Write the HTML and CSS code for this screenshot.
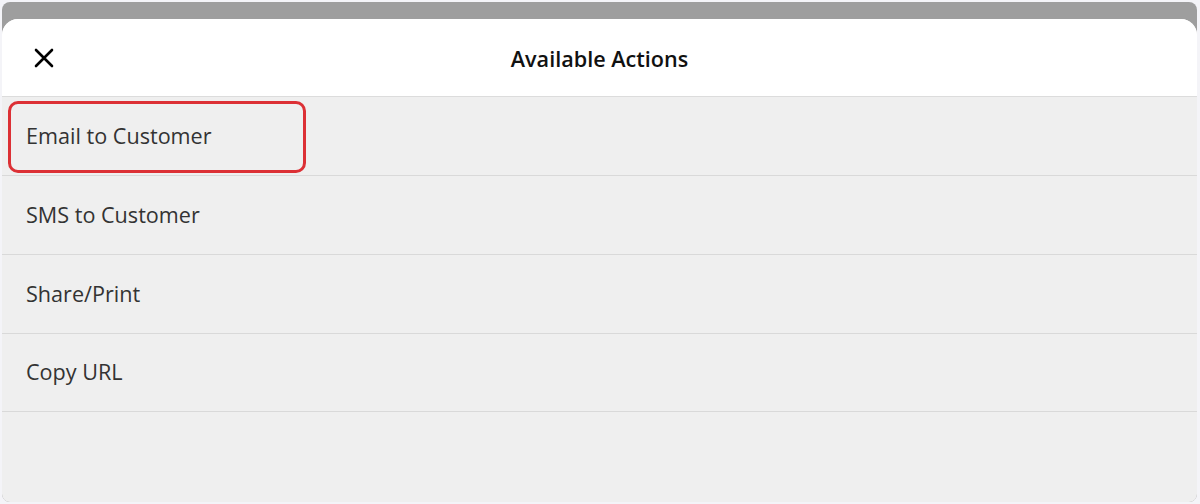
FILE: index.html
```html
<!DOCTYPE html>
<html>
<head>
<meta charset="utf-8">
<link rel="stylesheet" href="styles.css">
</head>
<body>
<div class="frame">
  <div class="sheet">
    <header class="sheet-header">
      <button class="close" aria-label="Close">
        <svg width="20" height="20" viewBox="0 0 20 20"><path d="M2 2 L18 18 M18 2 L2 18" stroke="#000" stroke-width="2.6" stroke-linecap="round" fill="none"/></svg>
      </button>
      <h1 class="title">Available Actions</h1>
    </header>
    <ul class="actions">
      <li class="action highlighted">Email to Customer<span class="mark"></span></li>
      <li class="action">SMS to Customer</li>
      <li class="action">Share/Print</li>
      <li class="action">Copy URL</li>
    </ul>
  </div>
</div>
</body>
</html>
```
FILE: styles.css
```css
html, body {
  margin: 0;
  padding: 0;
  background: #f4f4f8;
}
body {
  padding: 2px 3px 2px 2px;
  height: 504px;
  box-sizing: border-box;
  font-family: "Open Sans", "Noto Sans", sans-serif;
}
.frame {
  height: 500px;
  border-radius: 8px;
  background: #9e9e9e;
  overflow: hidden;
  padding-top: 17px;
  box-sizing: border-box;
  display: flex;
  flex-direction: column;
}
.sheet {
  flex: 1;
  background: #efefef;
  border-radius: 16px 16px 0 0;
  overflow: hidden;
  display: flex;
  flex-direction: column;
}
.sheet-header {
  height: 77px;
  background: #fff;
  border-bottom: 1px solid #dcdcdc;
  display: flex;
  align-items: center;
  justify-content: center;
  position: relative;
  flex-shrink: 0;
}
.close {
  position: absolute;
  left: 31px;
  top: 28px;
  width: 22px;
  height: 22px;
  padding: 0;
  border: 0;
  background: none;
  display: flex;
  align-items: center;
  justify-content: center;
}
.title {
  margin: 0;
  padding-top: 2px;
  font-size: 21.6px;
  font-weight: 600;
  color: #111;
}
.actions {
  list-style: none;
  margin: 0;
  padding: 0;
}
.action {
  height: 78px;
  box-sizing: content-box;
  border-bottom: 1px solid #d9d9d9;
  display: flex;
  align-items: center;
  padding-left: 24px;
  font-size: 21.6px;
  color: #333;
  position: relative;
}
.action:nth-child(n+3) {
  height: 77.5px;
}
.action > :first-child {
  margin: 0;
}
.actions .action {
  line-height: 1;
  padding-bottom: 0;
}
.mark {
  position: absolute;
  left: 6px;
  top: 4px;
  width: 292px;
  height: 66px;
  border: 3px solid #dc3035;
  border-radius: 10px;
}
```
